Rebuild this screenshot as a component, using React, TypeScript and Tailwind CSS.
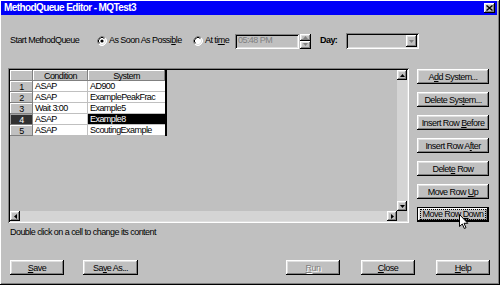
import React from "react";

const raised =
  "bg-[#c0c0c0] shadow-[inset_-1px_-1px_#000,inset_1px_1px_#fff,inset_-2px_-2px_#808080,inset_2px_2px_#dfdfdf]";
const sunken =
  "shadow-[inset_1px_1px_#808080,inset_-1px_-1px_#fff,inset_2px_2px_#000,inset_-2px_-2px_#dfdfdf]";
const cellRaised =
  "bg-[#c0c0c0] shadow-[inset_-1px_-1px_#808080,inset_1px_1px_#fff]";

function Radio({ checked }: { checked?: boolean }) {
  return (
    <svg width="10" height="10" viewBox="0 0 10 10" className="shrink-0">
      <circle cx="5" cy="5" r="4.5" fill="#fff" />
      <path d="M1.82 8.18 A4.5 4.5 0 0 1 8.18 1.82" stroke="#808080" fill="none" />
      <path d="M8.18 1.82 A4.5 4.5 0 0 1 1.82 8.18" stroke="#fff" fill="none" />
      <path d="M2.5 7.5 A3.5 3.5 0 0 1 7.5 2.5" stroke="#000" fill="none" strokeWidth="1" />
      <path d="M7.5 2.5 A3.5 3.5 0 0 1 2.5 7.5" stroke="#dfdfdf" fill="none" strokeWidth="1" />
      {checked && <circle cx="5" cy="5" r="1.6" fill="#000" />}
    </svg>
  );
}

function Tri({ dir, color = "#000" }: { dir: "up" | "down" | "left" | "right"; color?: string }) {
  const pts: Record<string, string> = {
    up: "0,3 2.5,0 5,3",
    down: "0,0 5,0 2.5,3",
    left: "3,0 3,5 0,2.5",
    right: "0,0 0,5 3,2.5",
  };
  const vertical = dir === "up" || dir === "down";
  return (
    <svg width={vertical ? 5 : 3} height={vertical ? 3 : 5} viewBox={vertical ? "0 0 5 3" : "0 0 3 5"}>
      <polygon points={pts[dir]} fill={color} />
    </svg>
  );
}

function Btn({
  children,
  className = "",
  disabled,
}: {
  children: React.ReactNode;
  className?: string;
  disabled?: boolean;
}) {
  return (
    <div
      className={`${raised} h-[15px] flex items-center justify-center leading-[10px] ${
        disabled ? "text-[#808080] [text-shadow:1px_1px_0_#fff]" : ""
      } ${className}`}
    >
      <span className="whitespace-pre">{children}</span>
    </div>
  );
}

const U = ({ children }: { children: React.ReactNode }) => (
  <span className="underline underline-offset-[1px]">{children}</span>
);

const rows = [
  ["1", "ASAP", "AD900"],
  ["2", "ASAP", "ExamplePeakFrac"],
  ["3", "Wait 3:00", "Example5"],
  ["4", "ASAP", "Example8"],
  ["5", "ASAP", "ScoutingExample"],
];

export default function App() {
  return (
    <div className="w-[500px] h-[285px] bg-[#c0c0c0] relative overflow-hidden flex flex-col font-['Liberation_Sans',Arial,sans-serif] text-[9px] tracking-[-0.55px] text-black shadow-[inset_-1px_-1px_#000,inset_1px_1px_#fff,inset_-2px_-2px_#808080]">
      {/* Title bar */}
      <div className="ml-[1px] mr-[3px] mt-[1px] h-[14px] bg-[#0000f8] flex items-center justify-between pl-[3px] pr-[2px]">
        <span className="text-white font-bold text-[10px] tracking-[-0.6px] leading-[12px]">
          MethodQueue Editor - MQTest3
        </span>
        <div className={`${raised} w-[11px] h-[10px] flex items-center justify-center`}>
          <svg width="7" height="6" viewBox="0 0 7 6">
            <path d="M0.5 0.5 L6.5 5.5 M6.5 0.5 L0.5 5.5" stroke="#000" strokeWidth="1.4" />
          </svg>
        </div>
      </div>

      {/* Start row */}
      <div className="mt-[18px] h-[16px] flex items-center">
        <span className="ml-[10px] w-[87px]">Start MethodQueue</span>
        <Radio checked />
        <span className="ml-[2px] w-[84px]">
          As Soon As Possi<U>b</U>le
        </span>
        <Radio />
        <span className="ml-[2px] w-[30px]">
          At ti<U>m</U>e
        </span>
        <div className={`${sunken} bg-[#c0c0c0] w-[64px] h-[15px] flex items-center pl-[3px] text-[#808080]`}>
          05:48 PM
        </div>
        <div className="ml-[1px] w-[11px] h-[15px] flex flex-col">
          <div className={`${raised} h-[7px] flex items-center justify-center`}>
            <Tri dir="up" color="#808080" />
          </div>
          <div className={`${raised} h-[8px] flex items-center justify-center`}>
            <Tri dir="down" color="#808080" />
          </div>
        </div>
        <span className="ml-[9px] w-[26px] font-bold">Day:</span>
        <div className={`${sunken} bg-[#c0c0c0] w-[73px] h-[16px] flex items-center justify-end p-[2px]`}>
          <div className={`${raised} w-[11px] h-[12px] flex items-center justify-center`}>
            <Tri dir="down" color="#808080" />
          </div>
        </div>
      </div>

      {/* Middle */}
      <div className="mt-[19px] flex">
        <div className={`${sunken} ml-[8px] w-[401px] h-[155px] p-[2px] flex flex-col`}>
          <div className="flex h-[141px]">
            <div className="flex-1 bg-[#c0c0c0] overflow-hidden">
              <div className="w-[157px] border-r-2 border-black">
                <div className="flex h-[11px]">
                  <div className={`${cellRaised} w-[23px]`} />
                  <div className={`${cellRaised} w-[55px] flex items-center justify-center leading-[10px]`}>
                    Condition
                  </div>
                  <div className={`${cellRaised} w-[77px] flex items-center justify-center leading-[10px]`}>
                    System
                  </div>
                </div>
                {rows.map((r) => {
                  const sel = r[0] === "4";
                  return (
                    <div key={r[0]} className="flex h-[11px]">
                      <div
                        className={`w-[23px] flex items-center justify-center leading-[10px] ${
                          sel
                            ? "bg-[#303030] text-white shadow-[inset_-1px_-1px_#808080,inset_1px_1px_#a0a0a0]"
                            : cellRaised
                        }`}
                      >
                        {r[0]}
                      </div>
                      <div className="w-[55px] bg-white border-r border-b border-[#c0c0c0] pl-[2px] flex items-center leading-[10px]">
                        {r[1]}
                      </div>
                      <div
                        className={`w-[77px] border-b border-[#c0c0c0] pl-[2px] flex items-center leading-[10px] ${
                          sel ? "bg-black text-white" : "bg-white"
                        }`}
                      >
                        {r[2]}
                      </div>
                    </div>
                  );
                })}
              </div>
            </div>
            {/* vertical scrollbar */}
            <div className="w-[10px] flex flex-col bg-[#d4d4d4]">
              <div className={`${raised} h-[10px] flex items-center justify-center`}>
                <Tri dir="up" />
              </div>
              <div className="flex-1" />
              <div className={`${raised} h-[10px] flex items-center justify-center`}>
                <Tri dir="down" />
              </div>
            </div>
          </div>
          {/* horizontal scrollbar */}
          <div className="flex h-[10px]">
            <div className="flex-1 flex bg-[#d4d4d4]">
              <div className={`${raised} w-[10px] flex items-center justify-center`}>
                <Tri dir="left" />
              </div>
              <div className="flex-1" />
              <div className={`${raised} w-[10px] flex items-center justify-center`}>
                <Tri dir="right" />
              </div>
            </div>
            <div className="w-[10px] bg-[#c0c0c0]" />
          </div>
        </div>

        <div className="ml-[8px] mt-[1px] w-[72px] flex flex-col gap-[8px]">
          <Btn>
            A<U>d</U>d System...
          </Btn>
          <Btn>
            Delete Sys<U>t</U>em...
          </Btn>
          <Btn>
            Insert Row <U>B</U>efore
          </Btn>
          <Btn>
            Insert Row A<U>f</U>ter
          </Btn>
          <Btn>
            Delet<U>e</U> Row
          </Btn>
          <Btn>
            Move Row <U>U</U>p
          </Btn>
          <div className="h-[15px] border border-black">
            <div className={`${raised} h-full flex items-center justify-center leading-[9px]`}>
              <span className="border border-dotted border-black px-[2px] whitespace-pre">
                Move Row <U>D</U>own
              </span>
            </div>
          </div>
        </div>
      </div>

      <div className="mt-[4px] ml-[10px] h-[10px] leading-[10px]">
        Double click on a cell to change its content
      </div>

      {/* Bottom buttons */}
      <div className="mt-[23px] h-[15px] flex">
        <Btn className="ml-[10px] w-[54px]">
          <U>S</U>ave
        </Btn>
        <Btn className="ml-[19px] w-[55px]">
          Sa<U>v</U>e As...
        </Btn>
        <div className="flex-1" />
        <Btn className="w-[54px]" disabled>
          <U>R</U>un
        </Btn>
        <Btn className="ml-[21px] w-[54px]">
          <U>C</U>lose
        </Btn>
        <Btn className="ml-[21px] mr-[10px] w-[54px]">
          <U>H</U>elp
        </Btn>
      </div>

      {/* mouse cursor */}
      <svg
        className="absolute left-[459px] top-[214px]"
        width="10"
        height="16"
        viewBox="0 0 10 16"
      >
        <path
          d="M0.5 0.5 V12.5 L3.3 10 L5.3 14.5 L7 13.7 L5 9.3 H8.8 Z"
          fill="#fff"
          stroke="#000"
          strokeWidth="1"
          strokeLinejoin="miter"
        />
      </svg>
    </div>
  );
}
